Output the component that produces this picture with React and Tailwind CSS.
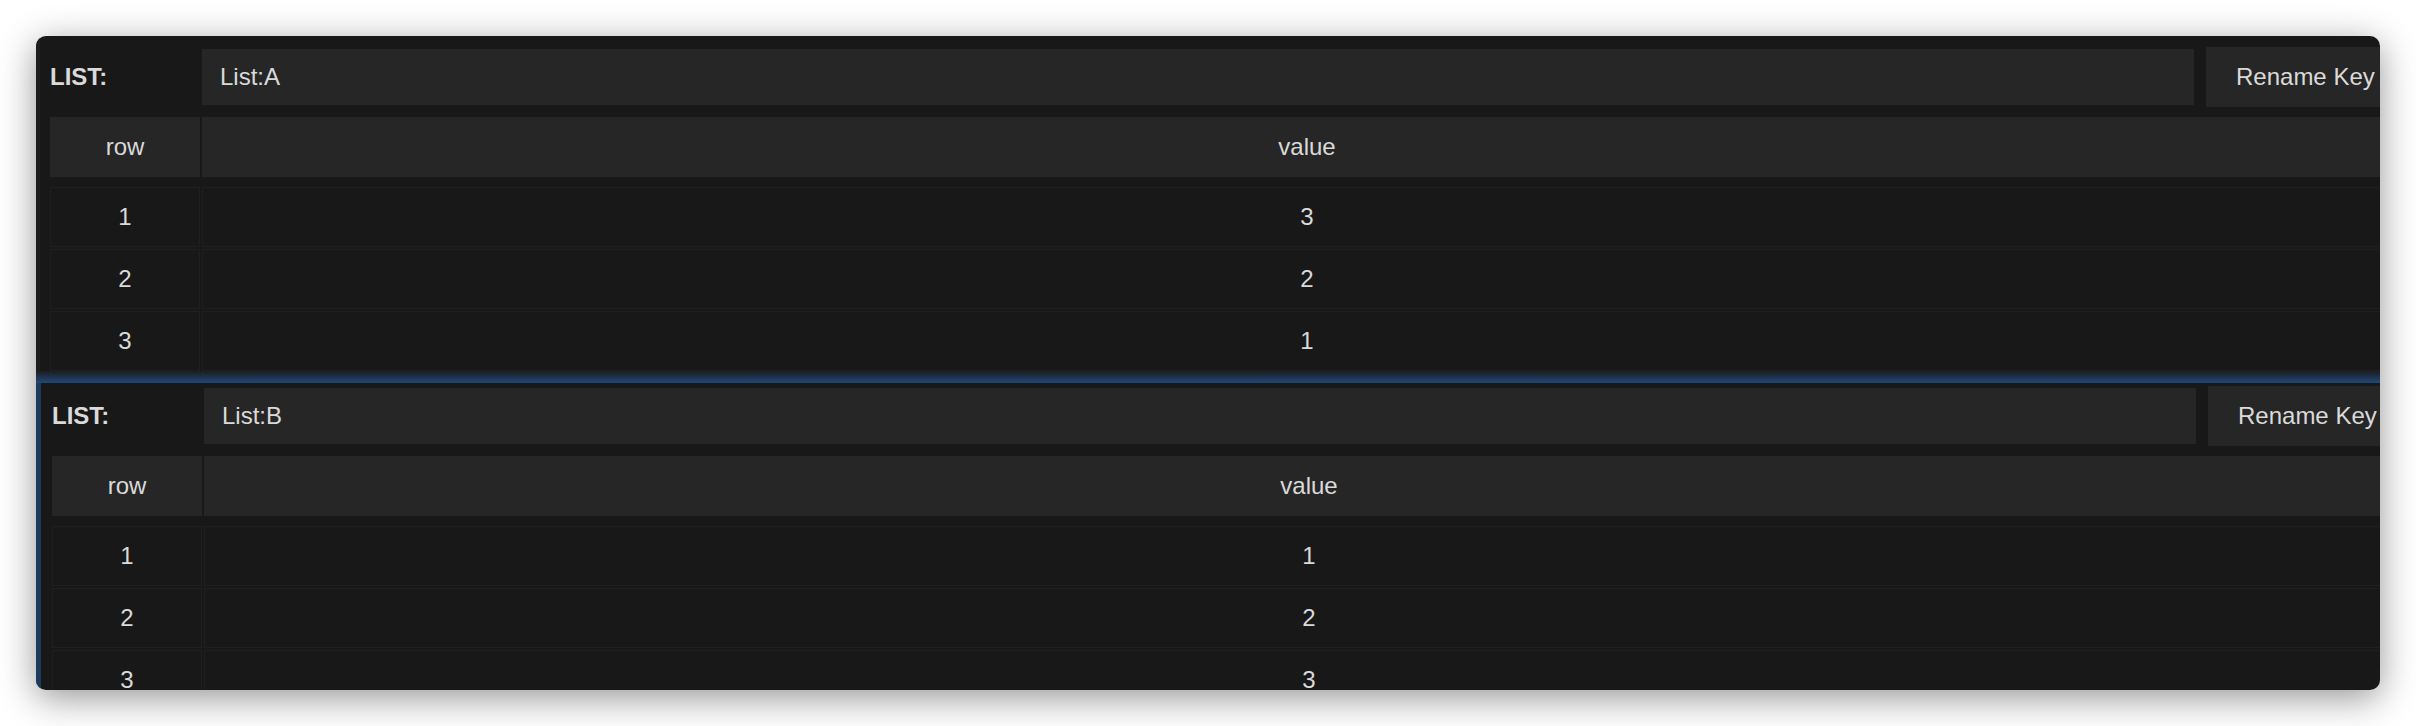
import React from "react";

const lists = [
  { name: "List:A", values: ["3", "2", "1"], selected: false },
  { name: "List:B", values: ["1", "2", "3"], selected: true },
];

function ListPanel({ name, values }) {
  return (
    <div className="w-[2362px] shrink-0">
      {/* key row */}
      <div className="flex h-[60px] items-center">
        <span className="w-[150px] shrink-0 font-bold">LIST:</span>
        <div className="ml-[2px] flex h-[56px] flex-1 items-center bg-[#262626] pl-[18px]">{name}</div>
        <button className="ml-[12px] h-[60px] w-[196px] shrink-0 bg-[#262626] pl-[30px] text-left">Rename Key</button>
        <div className="w-[10px] shrink-0" />
      </div>

      {/* header */}
      <div className="mt-[10px] flex h-[60px] gap-[2px]">
        <div className="flex w-[150px] shrink-0 items-center justify-center bg-[#262626]">row</div>
        <div className="flex flex-1 items-center justify-center bg-[#262626]">value</div>
      </div>

      {/* rows */}
      <div className="mt-[10px] flex flex-col gap-[2px]">
        {values.map((v, i) => (
          <div key={i} className="flex h-[60px] gap-[2px]">
            <div className="flex w-[150px] shrink-0 items-center justify-center border border-[#1f1f1f]">{i + 1}</div>
            <div className="flex flex-1 items-center justify-center border border-[#1f1f1f]">{v}</div>
          </div>
        ))}
      </div>
    </div>
  );
}

export default function App() {
  return (
    <div className="h-[726px] w-[2416px] bg-white pl-[36px] pt-[36px] font-['Liberation_Sans',Arial,sans-serif] text-[24px] text-[#dadada]">
      <div className="h-[654px] w-[2344px] overflow-hidden rounded-[10px] bg-[#181818] shadow-[0_8px_36px_rgba(0,0,0,0.42)]">
        {lists.map((l) =>
          l.selected ? (
            <div key={l.name}>
              <div className="h-[12px] bg-linear-to-b from-[#1a1d22] to-[#1f4979]" />
              <div className="flex border-l-[5px] border-[#1d3b5e] pl-[11px] pt-[3px]">
                <ListPanel name={l.name} values={l.values} />
              </div>
            </div>
          ) : (
            <div key={l.name} className="flex border-l-4 border-[#1e1e1e] pl-[10px] pt-[11px]">
              <ListPanel name={l.name} values={l.values} />
            </div>
          )
        )}
      </div>
    </div>
  );
}
